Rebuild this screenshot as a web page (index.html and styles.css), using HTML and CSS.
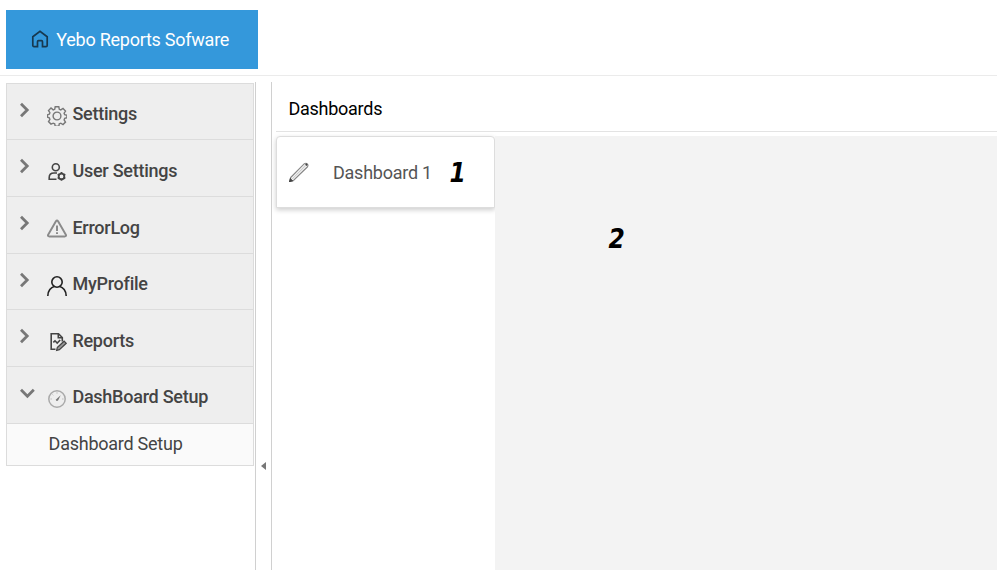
FILE: index.html
```
<!DOCTYPE html>
<html lang="en">
<head>
<meta charset="utf-8">
<title>Yebo Reports</title>
<link rel="stylesheet" href="styles.css">
</head>
<body>
<header class="topbar">
  <a class="brand">
    <svg class="home" viewBox="0 0 18 18"><path d="M1.800 6.700 9 1.400l7.200 5.300v8.700a1.200 1.200 0 0 1-1.200 1.200h-3.500v-4.900a1 1 0 0 0-1-1H7.500a1 1 0 0 0-1 1v4.900H3a1.200 1.200 0 0 1-1.200-1.200z"/></svg>
    <span>Yebo Reports Sofware</span>
  </a>
</header>
<div class="layout">
  <nav class="menu">
    <div class="item short">
      <svg class="chev" viewBox="0 0 16 16"><path d="m2 1.800 6.200 6.200L2 14.200"/></svg>
      <svg class="icon gear" viewBox="0 0 20 20"><circle cx="10" cy="10" r="3.900"/><path d="M8.200 .8h3.600l.5 2.500 1.500.6 2.200-1.400 2.500 2.500-1.400 2.200.6 1.500 2.200.5v2.600l-2.200.6-.6 1.500 1.400 2.200-2.500 2.500-2.200-1.400-1.500.6-.5 2.400H8.200l-.5-2.400-1.500-.6L4 18.100l-2.500-2.500 1.400-2.200-.6-1.500-1.700-.6V8.700l1.700-.5.600-1.500L1.500 4.500 4 2l2.200 1.900 1.500-.6z"/></svg>
      <span>Settings</span>
    </div>
    <div class="item low">
      <svg class="chev" viewBox="0 0 16 16"><path d="m2 1.800 6.200 6.200L2 14.200"/></svg>
      <svg class="icon user-gear" viewBox="0 0 20 20"><circle cx="8.800" cy="5.200" r="3.500"/><path d="M9.500 17.200H2.200v-1.700q0-4.500 4.800-4.500h3"/><circle class="cog" cx="14.500" cy="14.400" r="2.800"/><path class="teeth" d="M14.500 10v1.500m0 5.800v1.500M10.700 12.200l1.300.8m5 2.800 1.300.8m-7.600 0 1.300-.8m5-2.800 1.300-.8"/></svg>
      <span>User Settings</span>
    </div>
    <div class="item low">
      <svg class="chev" viewBox="0 0 16 16"><path d="m2 1.800 6.200 6.200L2 14.200"/></svg>
      <svg class="icon warn" viewBox="0 0 20 20"><path d="M8.900 2.300q1.100-1.400 2.200 0l7.800 13.500q.5 1.600-1.200 1.600H2.300q-1.700 0-1.200-1.600z"/><path class="mark" d="M10 6.500v5.500m0 1.200v1.800"/></svg>
      <span>ErrorLog</span>
    </div>
    <div class="item short">
      <svg class="chev" viewBox="0 0 16 16"><path d="m2 1.800 6.200 6.200L2 14.200"/></svg>
      <svg class="icon person" viewBox="0 0 20 20"><circle cx="10" cy="6" r="5.200"/><path d="M.8 20c0-5.300 3.200-8.800 6.500-9.500M19.200 20c0-5.300-3.200-8.800-6.500-9.500"/></svg>
      <span>MyProfile</span>
    </div>
    <div class="item low">
      <svg class="chev" viewBox="0 0 16 16"><path d="m2 1.800 6.200 6.200L2 14.200"/></svg>
      <svg class="icon report" viewBox="0 0 20 20"><path d="M8.500 17.200H4.200V1.800h7.300l3.800 3.700v4"/><path d="M11.300 2v3.700h3.800M6.300 10.300l1.700-1.500 2.200 2.200 3-3"/><path class="pen" d="m10.300 15.500 6.800-6.300 2.100 2.100-6.800 6.300-2.800.8z"/></svg>
      <span>Reports</span>
    </div>
    <div class="item">
      <svg class="chev" viewBox="0 0 16 16"><path d="m2 4.800 6.400 6.400 6.400-6.400"/></svg>
      <svg class="icon gauge" viewBox="0 0 20 20"><circle cx="10" cy="10" r="8.200"/><path class="ticks" d="M10 3.300v1.300M3.500 10h1.300M15.200 10h1.300M5.500 5.500l.8.800"/><path class="needle" d="m8.700 10.800 5-4.500-2.500 5q-1.500 1.600-2.500-.5z"/></svg>
      <span>DashBoard Setup</span>
    </div>
    <div class="subitem">Dashboard Setup</div>
  </nav>
  <div class="splitter"><i class="arrow"></i></div>
  <main class="main">
    <h1 class="title">Dashboards</h1>
    <div class="content">
      <aside class="list">
        <div class="card">
          <svg class="pencil" viewBox="0 0 20 20"><path d="M1.700 15.500 15.400 1.700q1.700-1 2.900.2t.2 2.900L4.700 18.300 1 19.100z"/><path class="core" d="M3.300 16.800 16.500 3.500"/><path class="ends" d="m1.500 17.500 1.200 1.200-1.700.4zM16.700 2l1.400 1.400"/></svg>
          <span class="name">Dashboard 1</span>
          <b class="num">1</b>
        </div>
      </aside>
      <section class="canvas"><b class="num">2</b></section>
    </div>
  </main>
</div>
</body>
</html>
```
FILE: styles.css
```
* { box-sizing: border-box; }
body {
  margin: 0;
  height: 570px;
  overflow: hidden;
  display: flex;
  flex-direction: column;
  background: #fff;
  color: #444;
  font: 18px/24px Roboto, sans-serif;
  letter-spacing: -.25px;
}
svg { fill: none; flex: none; }
.topbar { height: 76px; flex: none; padding: 10px 6px 0; border-bottom: 1px solid #ebebeb; }
.brand {
  width: 252px;
  height: 59px;
  padding-left: 25px;
  display: flex;
  align-items: center;
  gap: 7.3px;
  background: #3498db;
  color: #fff;
  white-space: nowrap;
}
.home { width: 18px; height: 18px; margin-top: -2px; stroke: #17384f; stroke-width: 1.7; }
.layout { flex: 1; display: flex; padding: 6px 0 0 6px; min-height: 0; }
.menu {
  width: 248px;
  margin: 1px 1px 0 0;
  align-self: flex-start;
  border: 1px solid #dcdcdc;
  border-bottom: 0;
  background: #eee;
  flex: none;
}
.item {
  height: 57px;
  display: flex;
  align-items: flex-start;
  padding: 18px 0 0 12px;
  border-bottom: 1px solid #dcdcdc;
  font-weight: 500;
}
.item.short { height: 56px; }
.item.low > span { margin-top: 1px; }
.chev { width: 16px; height: 16px; stroke: #777; stroke-width: 2.8; }
.item .icon { width: 20px; height: 20px; margin: 4px 5.4px 0 12px; stroke: #444; stroke-width: 1.6; }
.item .gear { stroke: #777; stroke-width: 1.4; }
.item .warn { stroke: #8a8a8a; stroke-width: 2; }
.item .person { stroke: #222; stroke-width: 1.6; }
.item .gauge { stroke: #aaa; stroke-width: 1.5; }
.item .cog { stroke-width: 1.8; }
.item .teeth { stroke-width: 1.8; }
.item .pen { fill: #999; stroke-width: 1.2; }
.item .needle { fill: #777; stroke: none; }
.item .ticks { stroke-width: .8; }
.subitem {
  height: 42px;
  padding: 8px 0 0 41.6px;
  background: #fafafa;
  border-bottom: 1px solid #dcdcdc;
}
.splitter {
  width: 17px;
  flex: none;
  border: solid #d0d0d0;
  border-width: 0 1px;
  padding: 380px 0 0 5px;
}
.arrow {
  display: block;
  width: 0;
  height: 0;
  border: solid transparent;
  border-width: 4px 5px 4px 0;
  border-right-color: #777;
}
.main { flex: 1; display: flex; flex-direction: column; padding-left: 4px; min-width: 0; }
.title {
  margin: 0 0 4px;
  height: 50px;
  padding: 15px 0 0 12.4px;
  border-bottom: 1px solid #e3e3e3;
  color: #000;
  font-size: 18px;
  font-weight: 400;
}
.content { flex: 1; display: flex; min-height: 0; }
.list { width: 219px; flex: none; }
.card {
  height: 72px;
  display: flex;
  align-items: center;
  padding-left: 12px;
  border: 1px solid #ddd;
  border-radius: 4px 4px 0 0;
  background: #fff;
  box-shadow: 0 2px 5px rgba(0, 0, 0, .2);
  color: #555;
}
.pencil { width: 20px; height: 20px; margin-right: 24px; stroke: #888; stroke-width: 1.2; }
.pencil .core { stroke: #ccc; }
.pencil .ends { stroke: #444; stroke-width: 1.8; }
.name { width: 98px; margin-top: 1px; white-space: nowrap; }
.num { color: #000; font: italic 700 26px/30px "DejaVu Sans Condensed", "DejaVu Sans", sans-serif; font-stretch: condensed; }
.card .num { margin: 2px 0 0 18.5px; }
.canvas { flex: 1; position: relative; z-index: 1; background: #f3f3f3; padding: 88px 0 0 113.5px; }
```
